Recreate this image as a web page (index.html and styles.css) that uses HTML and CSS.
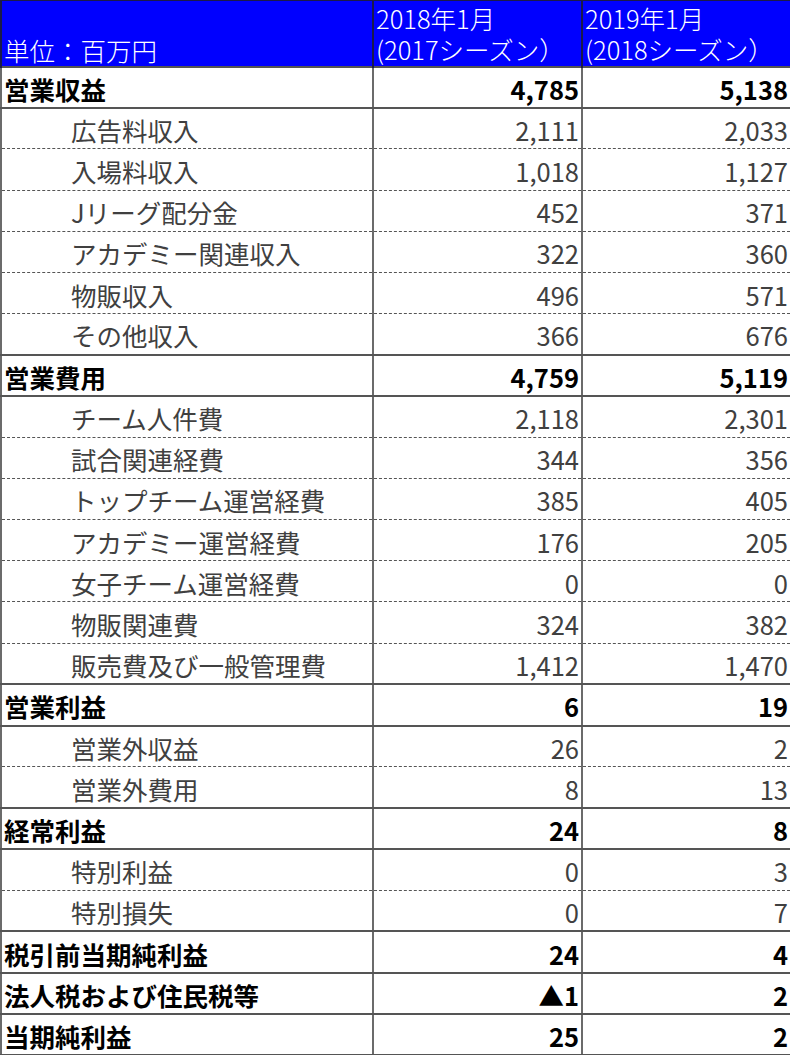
FILE: index.html
```html
<!DOCTYPE html>
<html lang="ja">
<head>
<meta charset="utf-8">
<link rel="stylesheet" href="styles.css">
</head>
<body>
<table class="pl">
  <colgroup><col class="c-label"><col class="c-num"><col class="c-num"></colgroup>
  <thead>
    <tr class="head">
      <th class="unit">単位：百万円</th>
      <th class="year"><span class="ln">2018年1月</span><span class="ln">(2017シーズン）</span></th>
      <th class="year"><span class="ln">2019年1月</span><span class="ln">(2018シーズン）</span></th>
    </tr>
  </thead>
  <tbody>
    <tr class="sec"><td>営業収益</td><td>4,785</td><td>5,138</td></tr>
    <tr class="sub"><td>広告料収入</td><td>2,111</td><td>2,033</td></tr>
    <tr class="sub"><td>入場料収入</td><td>1,018</td><td>1,127</td></tr>
    <tr class="sub"><td>Jリーグ配分金</td><td>452</td><td>371</td></tr>
    <tr class="sub"><td>アカデミー関連収入</td><td>322</td><td>360</td></tr>
    <tr class="sub"><td>物販収入</td><td>496</td><td>571</td></tr>
    <tr class="sub last"><td>その他収入</td><td>366</td><td>676</td></tr>
    <tr class="sec"><td>営業費用</td><td>4,759</td><td>5,119</td></tr>
    <tr class="sub"><td>チーム人件費</td><td>2,118</td><td>2,301</td></tr>
    <tr class="sub"><td>試合関連経費</td><td>344</td><td>356</td></tr>
    <tr class="sub"><td>トップチーム運営経費</td><td>385</td><td>405</td></tr>
    <tr class="sub"><td>アカデミー運営経費</td><td>176</td><td>205</td></tr>
    <tr class="sub"><td>女子チーム運営経費</td><td>0</td><td>0</td></tr>
    <tr class="sub"><td>物販関連費</td><td>324</td><td>382</td></tr>
    <tr class="sub last"><td>販売費及び一般管理費</td><td>1,412</td><td>1,470</td></tr>
    <tr class="sec"><td>営業利益</td><td>6</td><td>19</td></tr>
    <tr class="sub"><td>営業外収益</td><td>26</td><td>2</td></tr>
    <tr class="sub last"><td>営業外費用</td><td>8</td><td>13</td></tr>
    <tr class="sec"><td>経常利益</td><td>24</td><td>8</td></tr>
    <tr class="sub"><td>特別利益</td><td>0</td><td>3</td></tr>
    <tr class="sub last"><td>特別損失</td><td>0</td><td>7</td></tr>
    <tr class="sec"><td>税引前当期純利益</td><td>24</td><td>4</td></tr>
    <tr class="sec"><td>法人税および住民税等</td><td>▲1</td><td>2</td></tr>
    <tr class="sec"><td>当期純利益</td><td>25</td><td>2</td></tr>
  </tbody>
</table>
</body>
</html>
```

FILE: styles.css
```css
html, body {
  margin: 0;
  padding: 0;
  background: #ffffff;
}

body {
  font-family: "Noto Sans CJK JP", "Noto Sans", sans-serif;
  width: 790px;
  height: 1055px;
  overflow: hidden;
}

.pl {
  width: 790px;
  table-layout: fixed;
  border-collapse: collapse;
  font-size: 25.5px;
}

.c-label { width: 372px; }
.c-num { width: 209px; }

.head th {
  box-sizing: border-box;
  background: #0000ff;
  color: #ffffff;
  font-weight: 300;
  height: 66px;
  padding: 0 2px;
  text-align: left;
  line-height: 31px;
  border-left: 2px solid #1a1a4a;
  border-right: 2px solid #1a1a4a;
  border-top: 1px solid #1a1a4a;
  white-space: nowrap;
}

.head th.unit {
  vertical-align: bottom;
  padding-bottom: 1px;
}

.head th.year {
  vertical-align: top;
  padding-top: 1px;
}

.ln {
  display: block;
  height: 31px;
}

tbody td {
  height: 41.2px;
  padding: 3px 2px 0 2px;
  line-height: 36px;
  border-left: 2px solid #6b6b6b;
  border-right: 2px solid #6b6b6b;
  white-space: nowrap;
  overflow: hidden;
  box-sizing: border-box;
}

tbody td:nth-child(2),
tbody td:nth-child(3) {
  text-align: right;
}

tr.sec td {
  color: #000000;
  font-weight: 700;
  border-top: 2px solid #555555;
  border-bottom: 2px solid #555555;
}

tr.sub td {
  color: #404040;
  font-weight: 400;
  border-bottom: 1px dashed #555555;
}

tr.sub td:first-child {
  padding-left: 69px;
}

tr.sub.last td {
  border-bottom: 2px solid #555555;
}

tbody tr:last-child td {
  border-bottom: 2px solid #555555;
}
```
